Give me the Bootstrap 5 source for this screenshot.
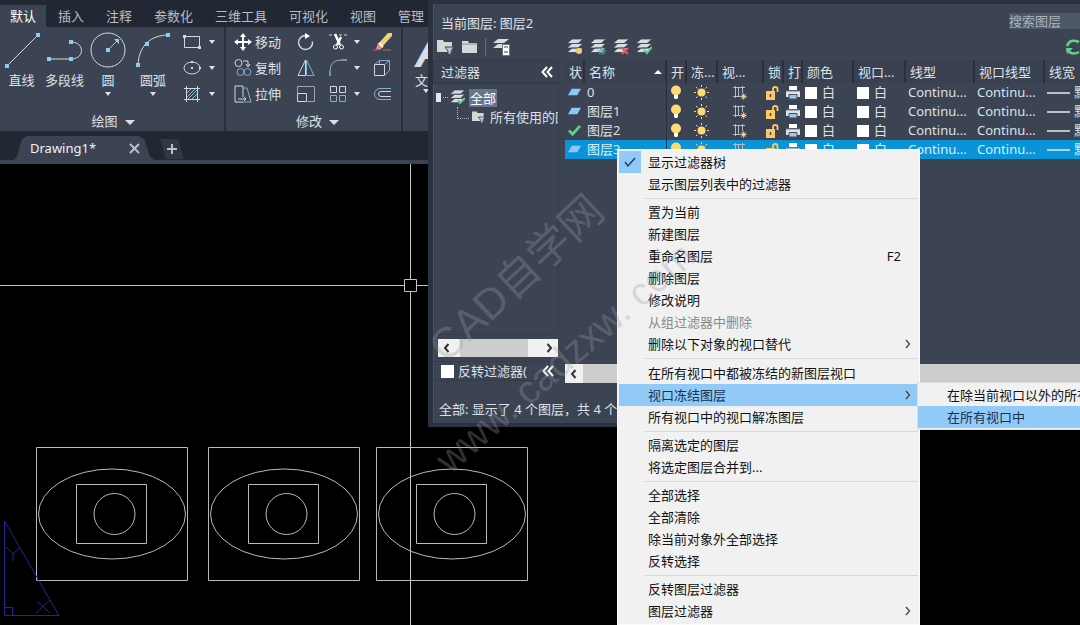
<!DOCTYPE html>
<html lang="zh-CN">
<head>
<meta charset="utf-8">
<meta name="viewport" content="width=device-width, initial-scale=1">
<title>Drawing1 - 图层特性管理器</title>
<link href="https://cdn.jsdelivr.net/npm/bootstrap@5.3.0/dist/css/bootstrap.min.css" rel="stylesheet">
<style>
  :root { --panel: #3c4453; --dark: #212833; --line: #2a313d; --text: #dde1e7; --pick: #91c9f7; }
  body { font: 13px/20px "Noto Sans", "Noto Sans CJK SC", sans-serif; color: var(--text); background: #000; }
  button { font: inherit; color: inherit; background: none; border: 0; padding: 0; }
  svg { display: block; flex: none; fill: none; stroke: #d3d8df; }
  .app-shell { height: 100vh; }

  .ribbon-tabs { background: var(--dark); height: 27px; padding-top: 5px; gap: 2px; color: #b8bec8; }
  .ribbon-tabs button { height: 22px; padding: 0 10px; line-height: 20px; }
  .ribbon-tabs .active { background: var(--panel); color: #fff; }
  .ribbon { background: var(--panel); height: 104px; }
  .tool-group { border-right: 2px solid var(--line); height: 104px; }
  .draw-group { width: 226px; padding-left: 2px; }
  .modify-group { width: 177px; padding-left: 8px; }
  .group-body { height: 84px; padding-top: 2px; }
  .group-title { line-height: 20px; }
  .big-tool { padding-top: 2px; line-height: 18px; text-align: center; }
  .big-tool svg { margin: 0 auto 2px; }
  .caret { width: 0; height: 0; border: 3px solid transparent; border-top: 4px solid var(--text); border-bottom: 0; display: inline-block; vertical-align: middle; }
  .big-tool .caret { margin-top: 3px; }
  .caret.wide { border-width: 5px; border-bottom: 0; margin-left: 7px; }
  .mini { height: 26px; gap: 7px; }
  .named { gap: 3px; width: 63px; }
  .text-tool { padding: 4px 12px 0; line-height: 18px; }
  .text-glyph { font: italic 700 46px/40px "Liberation Sans", sans-serif; color: #d9dde3; }

  .file-tabs { background: var(--dark); height: 33px; padding: 5px 0 0 14px; border-bottom: 4px solid var(--panel); gap: 6px; }
  .file-tab { background: var(--panel); width: 140px; height: 24px; padding: 0 14px 0 16px; clip-path: polygon(0 100%, 3px 85%, 8px 12%, 13px 0, 125px 0, 130px 12%, 136px 85%, 100% 100%); color: #f0f2f5; }
  .add-tab { background: #303846; width: 24px; height: 20px; margin-top: 3px; clip-path: polygon(0 0, 18px 0, 100% 100%, 6px 100%); }

  .layer-window { position: absolute; left: 428px; right: 0; top: 0; height: 427px; background: var(--panel); border: 5px solid #2b323f; border-top-width: 4px; border-right: 0; border-bottom-width: 4px; box-shadow: inset 1px 0 #4a5363; }
  .window-title { height: 30px; padding: 9px 0 0 8px; }
  .search-box { width: 71px; height: 16px; border: 0; padding: 0; background: #4c5767; color: #fff; }
  .search-box::placeholder { color: #aab4c1; opacity: 1; }
  .bar-tools { height: 26px; gap: 7px; padding-left: 4px; }
  .bar-left { width: 123px; gap: 7px; }
  .vr-line { width: 1px; height: 18px; background: #626b79; }
  .filters { width: 126px; margin-right: 6px; }
  .filter-head { height: 23px; line-height: 18px; padding: 0 5px 0 7px; background: #3a4150; border: 1px solid #343c49; }
  .filter-tree { height: 252px; margin: 0; padding: 4px 0 0 3px; border: 1px solid #343c49; border-left: 0; overflow: hidden; white-space: nowrap; }
  .filter-tree li { height: 19px; }
  .expander { width: 5px; height: 9px; background: #e5e8ec; }
  .dots { width: 5px; border-top: 1px dotted #aab2bd; margin: 0 2px; }
  .picked { background: #65758d; color: #fff; line-height: 18px; padding: 0 1px; }
  .branch { width: 12px; height: 12px; margin: -8px 3px 0 21px; border: 1px dotted #aab2bd; border-width: 0 0 1px 1px; }
  .scroll-strip { background: #f1f1f1; height: 18px; }
  .scroll-strip svg { stroke: #333; stroke-width: 2; }
  .filters .scroll-strip { margin: 4px 1px 0 5px; padding: 0 5px; }
  .filters .thumb { width: 68px; margin-left: -5px; height: 18px; background: #cdcdcd; }
  .invert-row { height: 20px; margin-top: 4px; padding: 0 5px 0 8px; border: solid #343c49; border-width: 1px 0; }
  .invert-row label { line-height: 18px; }
  .invert-row input { appearance: none; width: 13px; height: 13px; background: #fff; margin: 0 4px 0 0; }
  .layers { min-width: 0; height: 323px; overflow: hidden; }
  .layers table { table-layout: fixed; width: 535px; border-collapse: collapse; white-space: nowrap; }
  .layers th { height: 23px; font-weight: 400; background: #3a4150; border-right: 2px solid var(--line); padding: 0 0 0 4px; overflow: hidden; }
  .layers td { height: 19px; line-height: 19px; padding: 0 0 0 3px; overflow: hidden; }
  .layers td:nth-child(2) { border-right: 1px solid var(--line); }
  .layers td svg { display: inline-block; vertical-align: middle; margin-top: -2px; }
  .layers .selected { background: #0a93d7; color: #d3f1ff; }
  .swatch { display: inline-block; width: 12px; height: 12px; background: #fff; margin: 0 5px -2px 0; }
  .up { width: 0; height: 0; border: 4px solid transparent; border-bottom-color: #fff; border-top: 0; margin-right: 3px; }
  .layers .scroll-strip { height: 19px; padding-left: 5px; }
  .layers .thumb { height: 19px; background: #cdcdcd; margin-left: 6px; }
  .status-line { padding: 16px 0 0 6px; }

  .watermark { position: absolute; inset: 0; z-index: 1200; pointer-events: none; }
  .watermark text { fill: #989ca3; fill-opacity: .32; stroke: none; font-family: "Liberation Sans", "Noto Sans CJK SC", sans-serif; }

  .layer-menu { --bs-dropdown-bg: #f1f1f1; --bs-dropdown-link-color: #111; position: absolute; display: block; left: 617px; top: 149px; bottom: 0; width: 303px; padding: 1px; border: 1px solid #fbfbfb; border-radius: 0; font-size: 13px; }
  .layer-menu .dropdown-item { height: 22px; line-height: 22px; padding: 0 7px 0 29px; }
  .layer-menu .hot { background: var(--pick); color: #16324f; }
  .layer-menu .dropdown-item:disabled { color: #8a8a8a; }
  .layer-menu .dropdown-divider { height: 1px; margin: 3px 0 2px 26px; border-color: #d7d7d7; }
  .layer-menu .dropdown-divider.tall { margin-bottom: 3px; }
  .layer-menu svg { stroke: #444; stroke-width: 1.3; }
  .tick { width: 22px; height: 22px; margin: 0 7px 0 -29px; padding: 4px; background: var(--pick); }
  .shortcut { margin-right: 10px; }
  .sub-menu { position: absolute; left: 298px; top: -2px; width: 260px; background: #f1f1f1; border: 1px solid #ddd; padding: 1px 0; z-index: 2; }
</style>
</head>
<body>
<svg width="0" height="0" class="position-absolute" aria-hidden="true">
  <symbol id="i-stack" viewBox="0 0 16 16"><path d="M5 0h11l-5 4.500H0zM5 4.500h11L11 9H0zM5 9h11l-5 4.500H0z" fill="#d9dce0" stroke="#39414f" stroke-width=".8"/></symbol>
  <symbol id="i-folder" viewBox="0 0 16 16"><path d="M0 2h6l1 2h8v10H0z" fill="#d5d9d6" stroke="none"/><path d="M0 5h15" stroke="#8d949e"/></symbol>
  <symbol id="i-funnel" viewBox="0 0 18 16"><path d="M0 1h6l1 2h8v10H0z" fill="#d5d9d6" stroke="none"/><path d="M8 8h9l-3 4v4l-3-1v-3z" fill="#c3c9d1" stroke="#39414f"/></symbol>
  <symbol id="i-plate" viewBox="0 0 14 10"><path d="M4 1h10l-4 7H0z" fill="#8cc7f5" stroke="none"/></symbol>
  <symbol id="i-check" viewBox="0 0 14 12"><path d="M1 6l4 4 8-9" stroke="#5ed286" stroke-width="3"/></symbol>
  <symbol id="i-bulb" viewBox="0 0 12 15"><circle cx="6" cy="5.500" r="5" fill="#ffd878" stroke="none"/><path d="M4 10h4v3l-1 1H5l-1-1z" fill="#fff" stroke="none"/></symbol>
  <symbol id="i-sun" viewBox="0 0 15 15"><circle cx="7.500" cy="7.500" r="4" fill="#ffd878" stroke="none"/><path d="M7.500 0v2M7.500 13v2M0 7.500h2M13 7.500h2M2 2l1.500 1.500M11.500 11.500L13 13M13 2l-1.500 1.500M3.500 11.500L2 13" stroke="#ffd878"/></symbol>
  <symbol id="i-vp" viewBox="0 0 14 14"><path d="M0 1.500h3M9 1.500h3M3 1.500h6M2.500 0v12M9.500 0v7M0 10.500h7M5.500 2v8" stroke="#b5bcc6"/><circle cx="10.500" cy="10.500" r="2" fill="#f3d588" stroke="none"/><path d="M10.500 7v7M7 10.500h7M8 8l5 5M13 8l-5 5" stroke="#e8cf8a" stroke-width=".7"/></symbol>
  <symbol id="i-lock" viewBox="0 0 13 14"><path d="M0 5h9v9H0z" fill="#ffc765" stroke="none"/><path d="M7 5V3q0-2 2.200-2T11.500 3v3" stroke="#ffc765" stroke-width="1.800"/><path d="M4.500 8v3" stroke="#3c4453" stroke-width="1.500"/></symbol>
  <symbol id="i-print" viewBox="0 0 14 14"><path d="M3 0h8v4H3z" fill="#fff" stroke="none"/><path d="M0 5h14v6H0z" fill="#dfe4e9" stroke="none"/><path d="M3 8.500h8V13H3z" fill="#9ccbe8" stroke="#44505f"/><path d="M0 5h14" stroke="#717a86"/></symbol>
  <symbol id="i-back" viewBox="0 0 12 12"><path d="M6 1L1.500 6 6 11M11 1L6.500 6 11 11" stroke="#fff" stroke-width="2"/></symbol>
  <symbol id="i-left" viewBox="0 0 6 10"><path d="M5 1L1.500 5 5 9"/></symbol>
  <symbol id="i-right" viewBox="0 0 6 10"><path d="M1 1l3.500 4L1 9"/></symbol>
</svg>

<div class="app-shell d-flex flex-column position-relative overflow-hidden">
  <nav class="ribbon-tabs d-flex" aria-label="功能区">
    <button class="active">默认</button><button>插入</button><button>注释</button><button>参数化</button><button>三维工具</button><button>可视化</button><button>视图</button><button>管理</button>
  </nav>

  <div class="ribbon d-flex">
    <section class="tool-group draw-group">
      <div class="group-body d-flex">
        <button class="big-tool align-self-start" style="width:39px">
          <svg width="36" height="38"><path d="M3 35L34 4"/><path d="M1 33h4v4H1zM32 2h4v4h-4z" fill="#8fcdf5" stroke="none"/></svg>直线</button>
        <button class="big-tool align-self-start" style="width:47px">
          <svg width="36" height="38"><path d="M2 28h22c14 0 14-17 0-17"/><path d="M0 26h4v4H0zM22 26h4v4h-4zM22 9h4v4h-4z" fill="#8fcdf5" stroke="none"/></svg>多段线</button>
        <button class="big-tool align-self-start" style="width:40px">
          <svg width="36" height="38"><circle cx="18" cy="19" r="17"/><path d="M18 19l9-9" stroke="#8fcdf5"/><path d="M16 17h4v4h-4zM24 8h5v5z" fill="#8fcdf5" stroke="none"/></svg>圆<br><i class="caret d-block mx-auto"></i></button>
        <button class="big-tool align-self-start" style="width:50px">
          <svg width="36" height="38"><path d="M3 34C4 14 16 4 34 4"/><path d="M1 32h4v4H1zM10 11h4v4h-4zM31 2h4v4h-4z" fill="#8fcdf5" stroke="none"/></svg>圆弧<br><i class="caret d-block mx-auto"></i></button>
        <div class="ms-1">
          <button class="mini d-flex align-items-center" aria-label="矩形"><svg width="20" height="18"><path d="M2.500 3.500h15v11h-15z"/><path d="M1 2h3v3H1zM16 13h3v3h-3z" fill="#d3d8df" stroke="none"/></svg><i class="caret"></i></button>
          <button class="mini d-flex align-items-center" aria-label="椭圆"><svg width="20" height="18"><ellipse cx="10" cy="9" rx="8" ry="6"/><path d="M9 8h2v2H9zM9 2h2v2H9zM17 8h2v2h-2z" fill="#d3d8df"  stroke="none"/></svg><i class="caret"></i></button>
          <button class="mini d-flex align-items-center" aria-label="图案填充"><svg width="20" height="18"><path d="M4.500 1v16M15.500 1v16M2 3.500h16M2 14.500h16"/><path d="M5 8l4-4M5 12l8-8M6 14l9-9M10 14l5-5" stroke="#7fb8dc"/></svg><i class="caret"></i></button>
        </div>
      </div>
      <div class="group-title text-center">绘图<i class="caret wide"></i></div>
    </section>

    <section class="tool-group modify-group">
      <div class="group-body d-flex">
        <div>
          <button class="mini named d-flex align-items-center"><svg width="18" height="18"><path d="M9 2v14M2 9h14" stroke="#fff" stroke-width="2"/><path d="M9 0l3 4H6zM9 18l3-4H6zM0 9l4-3v6zM18 9l-4-3v6z" fill="#fff" stroke="none"/></svg><span class="text-nowrap">移动</span></button>
          <button class="mini named d-flex align-items-center"><svg width="18" height="18"><circle cx="4.500" cy="4" r="3.500"/><path d="M9 2h5v5M12 5l2 3 2-3"/><circle cx="6.500" cy="13" r="3.500" stroke="#7fb0d3"/><circle cx="13.500" cy="13" r="3.500" stroke="#7fb0d3"/></svg><span class="text-nowrap">复制</span></button>
          <button class="mini named d-flex align-items-center"><svg width="18" height="18"><path d="M9 12V1H1v16h8M4 14h8M10 12l2 2-2 2"/><path d="M10 3h3l4 14H9" stroke="#7fb0d3"/></svg><span class="text-nowrap">拉伸</span></button>
        </div>
        <div style="width:32px">
          <button class="mini d-flex align-items-center" aria-label="旋转"><svg width="18" height="18"><path d="M8 2.500a7 7 0 1 0 7.500 6" stroke-width="1.400"/><path d="M8 0l5 3-5 3z" fill="#fff" stroke="none"/></svg></button>
          <button class="mini d-flex align-items-center" aria-label="镜像"><svg width="18" height="18"><path d="M8.500 1v15.500H1z"/><path d="M9.500 1v15.500H17z" stroke="#7fb0d3"/></svg></button>
          <button class="mini d-flex align-items-center" aria-label="缩放"><svg width="18" height="18"><path d="M.5 8V1.500h17v15h-7" stroke="#9aa6b4"/><path d="M.5 8.500h9v8h-9z"/></svg></button>
        </div>
        <div style="width:44px">
          <button class="mini d-flex align-items-center" aria-label="修剪"><svg width="18" height="18"><path d="M0 2h18" stroke-dasharray="3 2"/><path d="M6 1l5 11M12 4l-4 8" stroke="#fff" stroke-width="2.500"/><circle cx="6.500" cy="14" r="2" stroke="#fff"/><circle cx="12.500" cy="14" r="2" stroke="#fff"/></svg><i class="caret"></i></button>
          <button class="mini d-flex align-items-center" aria-label="圆角"><svg width="18" height="18"><path d="M1 17V12M12 1h6"/><path d="M1 12Q1 1 12 1" stroke="#7fb0d3"/></svg><i class="caret"></i></button>
          <button class="mini d-flex align-items-center" aria-label="阵列"><svg width="18" height="18"><path d="M1.500 1.500h6v6h-6zM10.500 1.500h6v6h-6z"/><path d="M1.500 10.500h6v6h-6zM10.500 10.500h6v6h-6z" stroke="#7fb0d3"/></svg><i class="caret"></i></button>
        </div>
        <div>
          <button class="mini d-flex align-items-center" aria-label="删除"><svg width="19" height="18"><path d="M0 17h5M10 17h8" stroke="#c55a6b"/><path d="M5 11L15 0h4v3L9 14z" fill="#f5cf73" stroke="none"/><path d="M5 10l5 4-3 3-4-1z" fill="#f0868f" stroke="none"/><path d="M6 10l4 4" stroke="#fff" stroke-width="2"/></svg></button>
          <button class="mini d-flex align-items-center" aria-label="分解"><svg width="18" height="18"><path d="M1.500 5.500h10v11h-10z"/><path d="M1.500 5.500l5-4h10l-5 4M16.500 1.500v10l-5 5M6.500 1.500V5" stroke="#7fb0d3"/></svg></button>
          <button class="mini d-flex align-items-center" aria-label="偏移"><svg width="18" height="18"><path d="M18 3.500H7a5.500 5.500 0 0 0 0 11h11" stroke="#7fb0d3"/><path d="M18 6.500H8a2.500 2.500 0 0 0 0 5h10"/></svg></button>
        </div>
      </div>
      <div class="group-title text-center">修改<i class="caret wide"></i></div>
    </section>
    <button class="text-tool text-start align-self-start"><span class="text-glyph d-block">A</span>文字<br><i class="caret d-block ms-2"></i></button>
  </div>

  <div class="file-tabs d-flex">
    <div class="file-tab d-flex align-items-center justify-content-between"><span>Drawing1*</span>
      <button aria-label="关闭"><svg width="11" height="11"><path d="M1 1l9 9M10 1l-9 9" stroke="#b9c0ca" stroke-width="2"/></svg></button></div>
    <button class="add-tab d-flex align-items-center justify-content-center" aria-label="新建"><svg width="10" height="10"><path d="M5 0v10M0 5h10" stroke="#b9c0ca" stroke-width="2"/></svg></button>
  </div>

  <main class="flex-grow-1">
    <svg width="100%" height="100%" stroke-linejoin="round">
      <defs><g id="eye"><path d="M36.500 283.500h151v133h-151zM76.500 320.500h70v59h-70z"/><ellipse cx="112" cy="350" rx="73.500" ry="45"/><circle cx="114.500" cy="350" r="20.500"/></g></defs>
      <g stroke="#b9b9b9"><use href="#eye"/><use href="#eye" x="172"/><use href="#eye" x="340"/></g>
      <path d="M0 121.500h404M416 121.500h20M410.500 0v115M410.500 127v400M404.500 115.500h12v12h-12z" stroke="#c4c4c4"/>
      <path d="M4.500 357v94.500h54.500zM4.500 443.500h8v8M6 383l7 7 7-7M13 390v7M37 437l13 12M50 436l-14 13" stroke="#23239a"/>
    </svg>
  </main>

  <section class="layer-window" aria-label="图层特性管理器">
    <div class="window-title d-flex justify-content-between"><span>当前图层: 图层2</span><input class="search-box" type="text" placeholder="搜索图层" aria-label="搜索图层"></div>
    <div class="bar-tools d-flex align-items-center">
      <div class="bar-left d-flex align-items-center">
        <button aria-label="新建特性过滤器"><svg width="18" height="16"><use href="#i-funnel"/></svg></button>
        <button aria-label="新建组过滤器"><svg width="16" height="16"><use href="#i-folder"/></svg></button>
        <span class="vr-line"></span>
        <button aria-label="图层状态管理器"><svg width="18" height="18"><path d="M5 1h11l-5 4H0zM5 6h5v4H0z" fill="#d9dce0" stroke="none"/><path d="M9.500 6.500h7v11h-7z" fill="#fff" stroke="#6c7683"/><path d="M11 9h4M11 14h4" stroke="#345"/></svg></button>
      </div>
      <button aria-label="新建图层"><svg width="16" height="16"><use href="#i-stack"/><circle cx="12" cy="12" r="3" fill="#f7cf70" stroke="none"/></svg></button>
      <button aria-label="在所有视口中都被冻结的新图层"><svg width="16" height="16"><use href="#i-stack"/><path d="M12 8v8M8 12h8M9 9l6 6M15 9l-6 6" stroke="#64b5bd"/></svg></button>
      <button aria-label="删除图层"><svg width="16" height="16"><use href="#i-stack"/><path d="M9 9l6 6M15 9l-6 6" stroke="#ef5163" stroke-width="2"/></svg></button>
      <button aria-label="置为当前"><svg width="16" height="16"><use href="#i-stack"/><path d="M8 11l3 3 5-6" stroke="#5ccb91" stroke-width="2"/></svg></button>
      <button class="ms-auto" aria-label="刷新"><svg width="14" height="16"><path d="M1 7q3-8 12-4M1 10q4 7 12 3" stroke="#60d38b" stroke-width="2.500"/><path d="M0 9h7l-6 6z" fill="#60d38b" stroke="none"/></svg></button>
    </div>
    <div class="d-flex">
      <div class="filters flex-shrink-0">
        <div class="filter-head d-flex align-items-center justify-content-between"><span>过滤器</span><button aria-label="收拢"><svg width="12" height="12"><use href="#i-back"/></svg></button></div>
        <ul class="filter-tree list-unstyled">
          <li class="d-flex align-items-center"><i class="expander"></i><i class="dots"></i><svg width="15" height="15" class="me-1"><use href="#i-stack"/><path d="M8 10l2 3 5-5" stroke="#5ccb91" stroke-width="2"/></svg><span class="picked">全部</span></li>
          <li class="d-flex align-items-center"><i class="branch flex-shrink-0"></i><svg width="14" height="14" class="me-1"><use href="#i-funnel"/></svg><span>所有使用的图层</span></li>
        </ul>
        <div class="scroll-strip d-flex align-items-center justify-content-between"><svg width="7" height="10"><use href="#i-left"/></svg><i class="thumb"></i><svg width="7" height="10" class="ms-1"><use href="#i-right"/></svg></div>
        <div class="invert-row d-flex align-items-center"><input type="checkbox" id="invert"><label for="invert" class="text-nowrap">反转过滤器(</label><button class="ms-auto" aria-label="收拢过滤器"><svg width="12" height="12"><use href="#i-back"/></svg></button></div>
      </div>
      <div class="layers flex-grow-1 d-flex flex-column justify-content-between">
        <table>
          <colgroup><col style="width:19px"><col style="width:82px"><col style="width:20px"><col style="width:31px"><col style="width:46px"><col style="width:20px"><col style="width:19px"><col style="width:51px"><col style="width:52px"><col style="width:69px"><col style="width:70px"><col></colgroup>
          <thead><tr><th>状</th><th><div class="d-flex align-items-center justify-content-between">名称<i class="up"></i></div></th><th>开</th><th>冻...</th><th>视...</th><th>锁</th><th>打</th><th>颜色</th><th>视口...</th><th>线型</th><th>视口线型</th><th>线宽</th></tr></thead>
          <tbody id="layer-rows"></tbody>
        </table>
        <div class="scroll-strip d-flex align-items-center"><svg width="7" height="10"><use href="#i-left"/></svg><i class="thumb flex-grow-1"></i></div>
      </div>
    </div>
    <div class="status-line">全部: 显示了 4 个图层，共 4 个图层</div>
  </section>

  <ul class="dropdown-menu layer-menu show">
    <li><button class="dropdown-item d-flex"><span class="tick"><svg width="14" height="14"><path d="M2 7l3 4 7-8" style="stroke:#12395c"/></svg></span>显示过滤器树</button></li>
    <li><button class="dropdown-item">显示图层列表中的过滤器</button></li>
    <li><hr class="dropdown-divider"></li>
    <li><button class="dropdown-item">置为当前</button></li>
    <li><button class="dropdown-item">新建图层</button></li>
    <li><button class="dropdown-item d-flex justify-content-between">重命名图层<span class="shortcut">F2</span></button></li>
    <li><button class="dropdown-item">删除图层</button></li>
    <li><button class="dropdown-item">修改说明</button></li>
    <li><button class="dropdown-item" disabled>从组过滤器中删除</button></li>
    <li><button class="dropdown-item d-flex justify-content-between align-items-center">删除以下对象的视口替代<svg width="6" height="10"><use href="#i-right"/></svg></button></li>
    <li><hr class="dropdown-divider tall"></li>
    <li><button class="dropdown-item">在所有视口中都被冻结的新图层视口</button></li>
    <li class="position-relative"><button class="dropdown-item hot d-flex justify-content-between align-items-center">视口冻结图层<svg width="6" height="10"><use href="#i-right"/></svg></button>
      <ul class="sub-menu list-unstyled">
        <li><button class="dropdown-item">在除当前视口以外的所有视口中</button></li>
        <li><button class="dropdown-item hot">在所有视口中</button></li>
      </ul></li>
    <li><button class="dropdown-item">所有视口中的视口解冻图层</button></li>
    <li><hr class="dropdown-divider"></li>
    <li><button class="dropdown-item">隔离选定的图层</button></li>
    <li><button class="dropdown-item">将选定图层合并到...</button></li>
    <li><hr class="dropdown-divider"></li>
    <li><button class="dropdown-item">全部选择</button></li>
    <li><button class="dropdown-item">全部清除</button></li>
    <li><button class="dropdown-item">除当前对象外全部选择</button></li>
    <li><button class="dropdown-item">反转选择</button></li>
    <li><hr class="dropdown-divider"></li>
    <li><button class="dropdown-item">反转图层过滤器</button></li>
    <li><button class="dropdown-item d-flex justify-content-between align-items-center">图层过滤器<svg width="6" height="10"><use href="#i-right"/></svg></button></li>
  </ul>

  <svg class="watermark" width="100%" height="100%">
    <text font-size="43" transform="translate(446 364) rotate(-43)">CAD自学网</text>
    <text font-size="39" transform="translate(450 475) rotate(-41)">www. cadzxw. com</text>
  </svg>
</div>

<script>
  const icon = (id, w, h) => `<svg width="${w}" height="${h}"><use href="#i-${id}"/></svg>`;
  const layers = [
    { name: '0', state: 'plate' }, { name: '图层1', state: 'plate' },
    { name: '图层2', state: 'check' }, { name: '图层3', state: 'plate', selected: true }
  ];
  const white = '<i class="swatch"></i>白';
  document.getElementById('layer-rows').innerHTML = layers.map(l => `
    <tr class="${l.selected ? 'selected' : ''}">
      <td>${icon(l.state, 13, 11)}</td><td>${l.name}</td><td>${icon('bulb', 12, 15)}</td>
      <td class="ps-2">${icon('sun', 15, 15)}</td><td class="ps-3">${icon('vp', 14, 14)}</td>
      <td>${icon('lock', 13, 14)}</td><td>${icon('print', 14, 14)}</td>
      <td>${white}</td><td class="ps-1">${white}</td><td>Continu...</td><td>Continu...</td>
      <td><svg width="23" height="4" class="me-1"><path d="M0 2h23" stroke="#e6e9ed" stroke-width="1.500"/></svg>默认</td>
    </tr>`).join('');
</script>
<script src="https://cdn.jsdelivr.net/npm/bootstrap@5.3.0/dist/js/bootstrap.bundle.min.js"></script>
</body>
</html>
